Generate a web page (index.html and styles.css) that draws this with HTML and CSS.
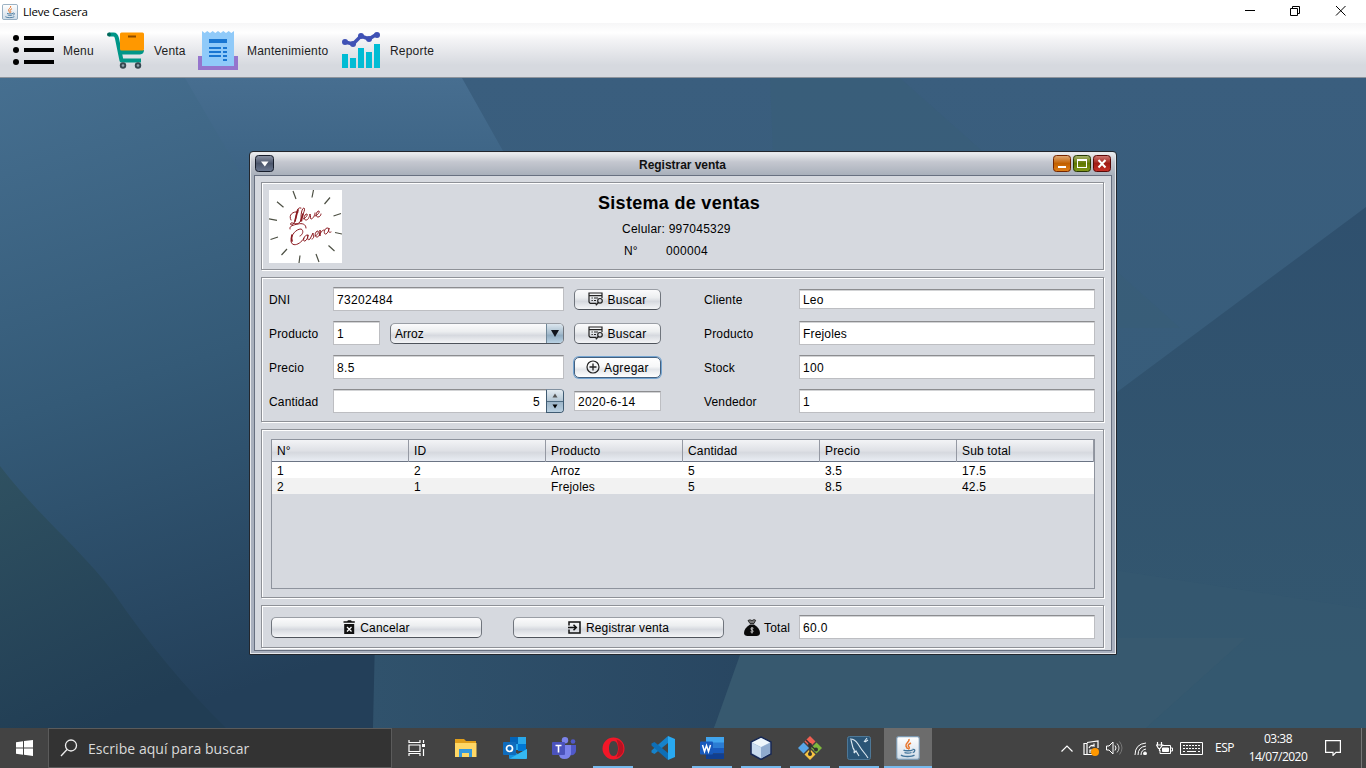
FILE: index.html
```html
<!DOCTYPE html>
<html lang="es">
<head>
<meta charset="utf-8">
<title>Lleve Casera</title>
<link rel="stylesheet" href="styles.css">
</head>
<body>
<svg class="defs" width="0" height="0">
  <defs>
    <linearGradient id="cup" x2="0" y2="1"><stop offset="0" stop-color="#fff"/><stop offset="1" stop-color="#cfdce8"/></linearGradient>
    <symbol id="java" viewBox="0 0 24 24">
      <rect x=".7" y=".7" width="22.6" height="22.6" rx="2" fill="url(#cup)" stroke="#7d9ab2" stroke-width="1.2"/>
      <path d="M13 3c1 3-4 4-3 7 .3 1.2 1.4 1.8 1.4 3M15 7c-3 1.500-3.500 2.500-2 4 .6 1 0 2-.8 2.300" fill="none" stroke="#e8762c" stroke-width="1.5"/>
      <path d="M7.500 14c1 1 7.500 1 9 0M8.500 16.500c1 .8 5.500.8 7 0M5 19c2 2 11 2 13.500 0M16.500 13.500c3-.5 3 2.500.2 3" fill="none" stroke="#41749a" stroke-width="1.3"/>
    </symbol>
    <symbol id="find" viewBox="0 0 16 14">
      <path d="M8.500 11.300H2.200L1 10V1h13v5M1 3.700h13" fill="none" stroke="#222" stroke-width="1.200"/>
      <path d="M3.500 6h1.300M6 6h4M3.500 8.500h1.300M6 8.500h2" stroke="#222"/>
      <circle cx="12" cy="8.800" r="2.300" fill="none" stroke="#222" stroke-width="1.200"/>
      <path d="M10.400 10.500 7.800 13.300" stroke="#222" stroke-width="1.400"/>
    </symbol>
  </defs>
</svg>
<div class="screen">
  <header class="titlebar">
    <svg class="app-icon" width="16" height="16"><use href="#java"/></svg>
    <span class="app-name">Lleve Casera</span>
    <svg class="winctl" width="104" height="16" viewBox="0 0 104 16" fill="none" stroke="#000">
      <path d="M0 6.500h10M45.500 4.500h7v7h-7zM47.500 4.500v-2h7v7h-2M91 2l9.500 9.500M100.500 2 91 11.500"/>
    </svg>
  </header>
  <nav class="toolbar">
    <a class="tool menu">
      <svg width="42" height="30" viewBox="0 0 42 30"><g><circle cx="3" cy="3" r="3"/><circle cx="3" cy="15" r="3"/><circle cx="3" cy="27" r="3"/><path d="M11 1h30v4H11zM11 13h30v4H11zM11 25h30v4H11z"/></g></svg>
      <span>Menu</span>
    </a>
    <a class="tool sale">
      <svg width="38" height="38" viewBox="0 0 38 38">
        <path d="M2 3.500h4.500c2 0 3 1.500 3.500 4L14.500 29.500h19.500" fill="none" stroke="#009688" stroke-width="4" stroke-linejoin="round"/>
        <circle cx="2" cy="3.500" r="2" fill="#00695c"/>
        <path d="M11 19h26q0 4-4 4.500H12z" fill="#009688"/>
        <rect x="13" y="1.500" width="24" height="18" rx="1.500" fill="#ff9800"/><path d="M21 4.500h8v2h-8z" fill="#8a4b00"/>
        <circle cx="16" cy="34.500" r="3.200" fill="#37474f"/><circle cx="31" cy="34.500" r="3.200" fill="#37474f"/><circle cx="16" cy="34.500" r="1.300" fill="#90a4ae"/><circle cx="31" cy="34.500" r="1.300" fill="#90a4ae"/>
      </svg>
      <span>Venta</span>
    </a>
    <a class="tool maint">
      <svg width="40" height="40" viewBox="0 0 40 40">
        <path d="M0 26h40v14H0z" fill="#9575cd"/>
        <path d="M4 1l2.700 2L9.300 1 12 3l2.700-2 2.600 2L20 1l2.700 2 2.600-2L28 3l2.700-2 2.600 2L36 1v35H4z" fill="#90caf9"/>
        <path d="M11 9h18v4H11zM11 17h12v2H11zM11 21h12v2H11zM11 25h12v2H11zM25 17h4v2h-4zM25 21h4v2h-4zM25 25h4v2h-4zM25 29h4v2h-4z" fill="#1976d2"/>
      </svg>
      <span>Mantenimiento</span>
    </a>
    <a class="tool report">
      <svg width="39" height="38" viewBox="0 0 39 38">
        <path d="M0 23h6v14H0zM8 27h6v10H8zM16 17h6v20h-6zM24 21h6v16h-6zM32 13h6v24h-6z" fill="#00bcd4"/>
        <path d="M3 11l8 2 8-8 8 3 8-5" stroke="#3f51b5" stroke-width="3.500" fill="none"/>
        <g fill="#3f51b5"><circle cx="3" cy="11" r="3"/><circle cx="11" cy="13" r="3"/><circle cx="19" cy="5" r="3"/><circle cx="27" cy="8" r="3"/><circle cx="35" cy="4" r="3"/></g>
      </svg>
      <span>Reporte</span>
    </a>
  </nav>
  <main class="desktop">
    <svg class="wallpaper" width="1366" height="650" viewBox="0 0 1366 650">
      <defs>
        <linearGradient id="w1" x1="0" y1="0" x2=".25" y2="1"><stop offset="0" stop-color="#466f90"/><stop offset=".5" stop-color="#345a77"/><stop offset="1" stop-color="#233f59"/></linearGradient>
        <linearGradient id="w2" x1="0" y1="0" x2="0" y2="1"><stop offset="0" stop-color="#476e90"/><stop offset=".3" stop-color="#3d6485"/><stop offset="1" stop-color="#304f6d"/></linearGradient>
        <linearGradient id="w3" x1="0" y1="0" x2="0" y2="1"><stop offset="0" stop-color="#3a5e7e"/><stop offset="1" stop-color="#355b76"/></linearGradient>
        <linearGradient id="w4" x1="0" y1="0" x2=".4" y2="1"><stop offset="0" stop-color="#2f5161"/><stop offset="1" stop-color="#213d54"/></linearGradient>
        <linearGradient id="w5" x1="0" y1="0" x2="0" y2="1"><stop offset="0" stop-color="#2f506e"/><stop offset="1" stop-color="#34586f"/></linearGradient>
        <linearGradient id="w6" x1="0" y1="0" x2="1" y2="0"><stop offset="0" stop-color="#30526c"/><stop offset="1" stop-color="#284661"/></linearGradient>
      </defs>
      <path d="M0 0h500v650H0z" fill="url(#w1)"/>
      <path d="M185 0h290l125 300H340L248 108z" fill="url(#w2)"/>
      <path d="M462 0h904v650H600V246L503 73z" fill="url(#w3)"/>
      <path d="M770 0h130l280 250H780z" fill="#3a5f75" opacity=".4"/>
      <path d="M1366 129 1117 314 1000 420v230h366z" fill="url(#w5)"/>
      <path d="M1100 490l266 41v119h-266z" fill="#355970" opacity=".6"/>
      <path d="M0 388Q60 540 113 514L226 650H0z" fill="none"/>
      <path d="M0 388C40 440 80 470 113 514Q165 590 226 650H0z" fill="url(#w4)"/>
      <path d="M375 560h380l-41 90H373z" fill="url(#w6)"/>
      <path d="M746 560h500l-100 90H714z" fill="#37596f"/>
    </svg>
    <section class="frame">
      <div class="frame-title">
        <svg width="20" height="19" viewBox="0 0 20 19"><defs><linearGradient id="fm" x2="0" y2="1"><stop offset="0" stop-color="#8c93a5"/><stop offset=".5" stop-color="#4c566c"/><stop offset="1" stop-color="#6c7991"/></linearGradient></defs><rect x=".5" y=".5" width="18" height="16" rx="3" fill="url(#fm)" stroke="#171d2b"/><path d="M6 6.500h7.500l-3.700 5z" fill="#fff"/></svg>
        <b class="t-frame">Registrar venta</b>
        <svg class="frame-btns" width="58" height="19" viewBox="0 0 58 19">
          <defs>
            <linearGradient id="fo" x2="0" y2="1"><stop offset="0" stop-color="#e1ab79"/><stop offset=".5" stop-color="#c26000"/><stop offset="1" stop-color="#df7f19"/></linearGradient>
            <linearGradient id="fg" x2="0" y2="1"><stop offset="0" stop-color="#a9b573"/><stop offset=".5" stop-color="#5f7700"/><stop offset="1" stop-color="#82991b"/></linearGradient>
            <linearGradient id="fr" x2="0" y2="1"><stop offset="0" stop-color="#d07b77"/><stop offset=".5" stop-color="#a01c15"/><stop offset="1" stop-color="#c93028"/></linearGradient>
          </defs>
          <rect x=".5" y=".5" width="17" height="16" rx="3" fill="url(#fo)" stroke="#742600"/><path d="M5 11h8v2H5z" fill="#fff"/>
          <rect x="20.500" y=".5" width="17" height="16" rx="3" fill="url(#fg)" stroke="#283907"/><path d="M24 4h10v9H24zm1 2v6h8V6z" fill="#fff" fill-rule="evenodd"/>
          <rect x="40.500" y=".5" width="17" height="16" rx="3" fill="url(#fr)" stroke="#590908"/><path d="M45.500 5l7 7.500M52.500 5l-7 7.500" stroke="#fff" stroke-width="2"/>
        </svg>
      </div>
      <div class="frame-body">
        <div class="panel head">
          <svg class="logo" width="73" height="73" viewBox="0 0 73 73">
            <path d="M0 0h73v73H0z" fill="#fff"/>
            <path d="M24 1l3 8M44.500 0 43 7.500M61 7.500 55.500 14M72 23.500 64.500 26M66 42.500l7 1.500M59.500 55.500 65.500 61M47 64l3 8M31 65.500 30 73M18 59l-5.500 6M9 47l-7.500 2.500M0 28.800l8 1.500M8 11.800l6.500 5.500" stroke="#4d5044" stroke-width="1.200" fill="none"/>
            <g fill="none" stroke="#8b1a20" stroke-linecap="round">
              <path d="M22 30C19 25 24 21 29 22M32 18C27 16 28 26 26 31C25 35 20 36 22 33C24 32 27 36 31 32C33 26 37 19 35 18C32 18 31 31 33 31"/>
              <path d="M34 29c3-1 5-4 4-5c-3 0-4 6-1 6c2 0 3-2 4-6c1 2 0 5 1 5c2 0 4-4 4-6M46 26c3-1 5-4 4-5c-3 0-4 6-1 6c2 0 3-2 3-3"/>
              <path d="M37 38c0-4-4-5-8-4c-5 1-9 2-8 5M31 46c3-1 4-6 1-7c-5 0-10 6-10 12c1 7 10 3 13-3"/>
              <path d="M39 45c-4-1-6 7-3 6c2-1 3-4 3-6c-1 4 0 6 2 4l3-6c0 3 2 5-1 6M46 46c3-1 4-4 3-5c-3 0-4 6-1 6c2 0 3-3 3-7c1 2-1 5 0 6c0-3 2-6 4-6M59 38c-4-1-5 7-2 6c2-1 3-4 3-6c-1 4 0 5 2 4"/>
              <path d="M26 31c1-4 2-9 3-11M32 31l2-7M23 45q-1 3 0 6" stroke-width="1.700"/>
            </g>
          </svg>
          <div class="company">
            <h1 class="t-h1">Sistema de ventas</h1>
            <p class="phone">Celular: 997045329</p>
            <p class="serial"><span>N°</span><span class="num">000004</span></p>
          </div>
        </div>
        <div class="panel form">
          <div class="row">
            <label>DNI</label><div class="input wide num">73202484</div>
            <button class="btn"><svg width="16" height="14"><use href="#find"/></svg><span>Buscar</span></button>
            <label class="right">Cliente</label><div class="input long short">Leo</div>
          </div>
          <div class="row">
            <label>Producto</label><div class="input code num">1</div>
            <div class="combo"><span>Arroz</span><i><svg width="9" height="8"><path d="M0 1h8L4 8z" fill="#10141c"/></svg></i></div>
            <button class="btn"><svg width="16" height="14"><use href="#find"/></svg><span>Buscar</span></button>
            <label class="right">Producto</label><div class="input long">Frejoles</div>
          </div>
          <div class="row">
            <label>Precio</label><div class="input wide num">8.5</div>
            <button class="btn focus"><svg width="14" height="14" viewBox="0 0 14 14"><circle cx="7" cy="7" r="6" fill="none" stroke="#222" stroke-width="1.200"/><path d="M7 3.500v7M3.500 7h7" stroke="#222" stroke-width="1.300"/></svg><span>Agregar</span></button>
            <label class="right">Stock</label><div class="input long num">100</div>
          </div>
          <div class="row">
            <label>Cantidad</label><div class="spinner"><div class="input num">5</div><div class="steps"><i><svg width="7" height="5"><path d="M.5 4.500h5L3 .5z" fill="#555"/></svg></i><i><svg width="7" height="5"><path d="M.5.500h5L3 4.500z" fill="#000"/></svg></i></div></div>
            <div class="input date">2020-6-14</div>
            <label class="right">Vendedor</label><div class="input long num">1</div>
          </div>
        </div>
        <div class="panel list">
          <div class="table">
            <div class="tr th"><span>N°</span><span>ID</span><span>Producto</span><span>Cantidad</span><span>Precio</span><span>Sub total</span></div>
            <div class="tr"><span>1</span><span>2</span><span>Arroz</span><span>5</span><span>3.5</span><span>17.5</span></div>
            <div class="tr alt"><span>2</span><span>1</span><span>Frejoles</span><span>5</span><span>8.5</span><span>42.5</span></div>
          </div>
        </div>
        <div class="panel foot">
          <button class="btn big"><svg width="12" height="14" viewBox="0 0 12 14"><path d="M.5 1.300h3.700L5 .3h3l.8 1h3v1.500H.5zM1.200 4h10v10h-10z" fill="#111"/><path d="M4 7l4.500 4.500M8.500 7 4 11.500" stroke="#fff" stroke-width="1.300"/></svg><span>Cancelar</span></button>
          <button class="btn big second"><svg width="13" height="13" viewBox="0 0 13 13"><path d="M1 4.500V1h11v11H1V8.500" fill="none" stroke="#111" stroke-width="1.500"/><path d="M0 6.500h8M5.500 3.700l2.800 2.800-2.800 2.800" fill="none" stroke="#111" stroke-width="1.500"/></svg><span>Registrar venta</span></button>
          <label class="total"><svg width="17" height="17" viewBox="0 0 17 17"><path d="M6 5.500C2 8 0 11 0 14c0 2 1.500 3 3.500 3h9c2 0 3.500-1 3.500-3 0-3-2-6-6-8.500z" fill="#0a0a0a"/><path d="M4 1.500 6 .8l2 .8 2-1 1.700.7L10 4.500H6z" fill="#777" stroke="#111" stroke-width=".8"/><path d="M9.500 9.300c-3-1-3.500 1.200-1.500 1.700s1.500 3-1.500 1.800M8 8v6.500" stroke="#ddd" stroke-width=".9" fill="none"/></svg><span>Total</span></label>
          <div class="input long num">60.0</div>
        </div>
      </div>
    </section>
  </main>
  <footer class="taskbar">
    <div class="start"><svg width="17" height="16" viewBox="0 0 17 16"><path d="M0 2.200 7 1.200v6.300H0zM8 1l9-1v7.500H8zM0 8.500h7v6.300l-7-1zM8 8.500h9V16l-9-1.200z" fill="#fff"/></svg></div>
    <div class="search"><svg width="18" height="18" viewBox="0 0 18 18" fill="none" stroke="#eee" stroke-width="1.300"><circle cx="11" cy="6.500" r="5.500"/><path d="M7 10.500 1 17"/></svg><span>Escribe aquí para buscar</span></div>
    <div class="apps">
      <span><svg width="18" height="16" viewBox="0 0 18 16" fill="none" stroke="#fff" stroke-width="1.200"><path d="M1 0v2.500h11V0M1 5h11v6.500H1zM1 16v-2.500h11V16M15.500 0v3M15.500 9v7"/><path d="M14 4h3v3h-3z" fill="#fff" stroke="none"/></svg></span>
      <span><svg width="22" height="20" viewBox="0 0 22 20"><path d="M0 1h9l2 2h10v6H0z" fill="#e09e1a"/><path d="M0 5h21.500v14H0z" fill="#ffd765"/><path d="M4 19v-8h13v8h-3v-4H7v4z" fill="#3598db"/></svg></span>
      <span><svg width="24" height="22" viewBox="0 0 24 22"><path d="M7 0h16v13H7z" fill="#28a8ea"/><path d="M7 0h8v7H7z" fill="#0364b8"/><path d="M15 7h8v7h-8z" fill="#0078d4"/><path d="M6 12l9 5 9-5v8.500c0 1-.5 1.500-1.500 1.500h-15C6.500 22 6 21.500 6 20.500z" fill="#1490df"/><path d="M7 21.500 24 12v8.500q0 1.500-1.500 1.500z" fill="#35b8f1"/><rect y="5" width="13" height="13" rx="1" fill="#0f6cbd"/><circle cx="6.500" cy="11.500" r="3" fill="none" stroke="#fff" stroke-width="1.700"/></svg></span>
      <span><svg width="24" height="22" viewBox="0 0 24 22"><circle cx="13" cy="3.200" r="3.200" fill="#7b83eb"/><circle cx="21" cy="4.500" r="2.300" fill="#5059c9"/><path d="M16 8h8v6q-1 5-6 4z" fill="#5059c9"/><path d="M7 8h12v9q-1 5-6.500 5T7 17z" fill="#7b83eb"/><rect y="5" width="13" height="13" rx="1" fill="#4b53bc"/><path d="M3.500 8.500h6M6.500 8.500v7" stroke="#fff" stroke-width="1.600"/></svg></span>
      <span class="run"><svg width="23" height="23" viewBox="0 0 23 23"><path d="M11.500.5a11 11 0 1 0 0 22 11 11 0 0 0 0-22zm0 3.500c3 0 4.500 3.500 4.500 7.500s-1.500 7.500-4.500 7.500S7 15.500 7 11.500 8.500 4 11.500 4z" fill="#f21728" fill-rule="evenodd"/><path d="M14.500 2.500q7 2 7 9t-7 9q4-9 0-18z" fill="#b81222"/></svg></span>
      <span><svg width="24" height="24" viewBox="0 0 24 24"><path d="M17 0 24 3v18l-7 3z" fill="#29a9f1"/><path d="M17 0v7L3.500 18 .5 16.500v-2z" fill="#1683cc"/><path d="M17 24v-7L3.500 6 .5 7.500v2z" fill="#0e6fb7"/></svg></span>
      <span class="run"><svg width="24" height="22" viewBox="0 0 24 22"><path d="M6 0h18v6H6z" fill="#41a5ee"/><path d="M6 5.500h18V11H6z" fill="#2b7cd3"/><path d="M6 11h18v5.500H6z" fill="#185abd"/><path d="M6 16.500h18V22H6z" fill="#103f91"/><rect y="4.500" width="13" height="13" rx="1" fill="#185abd"/><path d="M2.500 8l2 6.500 2-6 2 6 2-6.500" stroke="#fff" stroke-width="1.500" fill="none"/></svg></span>
      <span class="run"><svg width="22" height="24" viewBox="0 0 22 24"><path d="M11 1 21 6v12l-10 5.500L1 18V6z" fill="#a5bfdd" stroke="#182955" stroke-width="1.500"/><path d="M11 2l9 4.500-9 4.500-9-4.500z" fill="#eef6fb"/><path d="M2 7l9 4.500V22l-9-5z" fill="#c9dcf0"/><path d="M20 7l-9 4.500V22l9-5z" fill="#8fabce"/></svg></span>
      <span class="run"><svg width="24" height="24" viewBox="0 0 24 24"><path d="M12 0l5.500 5.500L12 11 6.500 5.500z" fill="#f05f52"/><path d="M5.500 6.500 11 12l-5.500 5.500L0 12z" fill="#58a6e8"/><path d="M18.500 6.500 24 12l-5.500 5.500L13 12z" fill="#7fb83d"/><path d="M12 13l5.500 5.500L12 24l-5.500-5.500z" fill="#f7c342"/><path d="M8 4l4 4v11M12 9l6 5" stroke="#313131" stroke-width="1.500" fill="none"/><circle cx="12" cy="9" r="2" fill="#313131"/><circle cx="18" cy="13.500" r="2" fill="#313131"/><circle cx="12" cy="18" r="2" fill="#313131"/></svg></span>
      <span class="run"><svg width="24" height="24" viewBox="0 0 24 24"><rect x=".5" y=".5" width="23" height="23" rx="2" fill="#2b5576" stroke="#4e7897"/><path d="M3 3q5 0 8 5t8 11l2 3M4 4l2 8q2 2 1 5l2-2 3 5M17 6l3-4M18 6l3-2" stroke="#dde9f1" stroke-width="1.100" fill="none"/></svg></span>
      <span class="run active"><svg width="24" height="24"><use href="#java"/></svg></span>
    </div>
    <div class="tray">
      <svg width="12" height="7" viewBox="0 0 12 7" fill="none" stroke="#fff" stroke-width="1.200"><path d="M.5 6.500 6 1l5.500 5.500"/></svg>
      <svg class="sync" width="17" height="17" viewBox="0 0 17 17" fill="none" stroke="#fff" stroke-width="1.200"><path d="M4 2.500 15 1v7M1 3.500h3v11H1zM4 14.500h6"/><path d="M6 8q2-4 5-2V3.500M11 6H8.500M7 13V10h2.500"/><circle cx="12" cy="12" r="4" fill="#ff9800" stroke="none"/></svg>
      <svg class="vol" width="18" height="14" viewBox="0 0 18 14" fill="none" stroke="#fff"><path d="M.5 5h2.500l4-4v12l-4-4H.500zM9 4.500q2 2.500 0 5"/><path d="M11 2.500q4 4.500 0 9" stroke="#ccc"/><path d="M13.500.5q5 6.500 0 13" stroke="#777"/></svg>
      <svg class="wifi" width="13" height="13" viewBox="0 0 13 13" fill="none" stroke="#fff"><path d="M1 13Q1 2 12 1M4 13q0-8 8-9M7 13q0-5 5-6"/><circle cx="11" cy="11.500" r="1.500" fill="#fff"/></svg>
      <svg class="bat" width="17" height="13" viewBox="0 0 17 13" fill="none" stroke="#fff"><path d="M6 3.500h8.500v8H4V8M15 6h1.500v3H15"/><path d="M6.500 6h6v3.500h-6z" fill="#fff"/><path d="M1.500 0v3h4V0M.5 3h6L4 6.500H2.500zM3.500 6v3" stroke-width="1.200"/></svg>
      <svg class="kbd" width="23" height="13" viewBox="0 0 23 13" fill="none" stroke="#fff"><path d="M.5.5h22v12H.5z"/><path d="M3 3.500h17M3 6.500h17" stroke-dasharray="2 1"/><path d="M3 9.500h2M7 9.500h9M18 9.500h2"/></svg>
      <span class="lang">ESP</span>
      <div class="clock"><span>03:38</span><span>14/07/2020</span></div>
      <svg class="note" width="16" height="16" viewBox="0 0 16 16" fill="none" stroke="#fff" stroke-width="1.200"><path d="M.6.6h14.800v11.800H11l-3 3v-3H.6z"/></svg>
    </div>
    <i class="peek"></i>
  </footer>
</div>
</body>
</html>
```
FILE: styles.css
```css
* { box-sizing: border-box; }
body { margin: 0; font: 12px/16px "Liberation Sans", Arial, sans-serif; color: #000; letter-spacing: .16px; }
svg { display: block; flex: none; }
.defs { position: absolute; }
.screen { display: flex; flex-direction: column; width: 1366px; height: 768px; overflow: hidden; }

.titlebar { display: flex; align-items: center; height: 23px; padding: 0 17px 0 2px; background: #fff; }
.app-name { margin-left: 5px; font: 11.5px/16px "Open Sans", "Noto Sans", sans-serif; letter-spacing: -.2px; }
.winctl { margin-left: auto; }

.toolbar { display: flex; height: 55px; background: linear-gradient(#f6f6f7, #fff 18%, #f4f4f6 30%, #d6d9df 78%, #d6d9df); border-bottom: 1px solid #8e949c; color: #1d1d1d; letter-spacing: .2px; }
.tool { display: flex; align-items: center; }
.tool span { padding-top: 2px; }
.menu { width: 80px; margin-left: 13px; gap: 8px; }
.sale { width: 79px; margin-left: 14px; gap: 9px; }
.maint { width: 130px; margin-left: 12px; gap: 9px; }
.report { margin-left: 14px; gap: 9px; }

.desktop { position: relative; height: 650px; background: #365a75; }
.frame { position: absolute; left: 249px; top: 73px; width: 868px; height: 504px; border: 1px solid #22262d; border-radius: 4px 4px 1px 1px; padding: 0 4px 4px; background: linear-gradient(#f0f1f3, #c4c7cf 10px, #a9b0bb 23px, #a9b0be); box-shadow: inset 1px 1px #e6e8eb, inset -1px -1px #e6e8eb; }
.frame-title { display: flex; align-items: flex-start; height: 23px; padding: 3px 1px 0 1px; }
.t-frame { margin-left: 364px; padding-top: 1px; line-height: 19px; color: #111; letter-spacing: -.03px; }
.frame-btns { margin-left: auto; }
.frame-body { display: flex; flex-direction: column; gap: 6px; height: 476px; padding: 6px 6px 0; border: 1px solid #687080; background: #d6d9df; }

.panel { flex: none; width: 843px; margin-bottom: 1px; border: 1px solid #8e9197; box-shadow: inset 1px 1px #fff, 1px 1px #fff; }
.head { display: flex; height: 88px; padding: 7px; }
.company { margin-left: 256px; }
.t-h1 { margin: 2px 0 0 0; font-size: 18px; line-height: 22px; letter-spacing: .3px; white-space: nowrap; }
.company p { margin: 0; line-height: 22px; }
.company .phone { margin: 4px 0 0 24px; letter-spacing: .22px; }
.serial { display: flex; }
.serial span:first-child { width: 42px; margin-left: 26px; }
.num { letter-spacing: .33px; }

.form { display: flex; flex-direction: column; gap: 10px; height: 145px; padding: 9px 7px; }
.row { display: flex; align-items: center; height: 24px; }
label { width: 64px; padding-top: 2px; }
label.right { width: 95px; margin-left: 43px; }
.input { height: 24px; padding: 4px 3px 0; border: 1px solid #bdbec2; border-top-color: #8c8d90; background: #fff; box-shadow: inset 0 1px #d2d3d5; }
.wide { width: 231px; margin-right: 10px; }
.code { width: 47px; margin-right: 10px; }
.long { width: 296px; }
.short, .date { height: 20px; padding-top: 2px; }
.date { width: 87px; letter-spacing: .3px; }
.btn { display: flex; align-items: center; justify-content: center; gap: 3px; width: 87px; height: 21px; padding: 0; border: 1px solid #70757d; border-top-color: #9a9ea5; border-bottom-color: #4e535b; border-radius: 5px; background: linear-gradient(#fbfbfc, #eceef0 40%, #d6d9df 60%, #f4f5f7); font: inherit; letter-spacing: .3px; color: #000; }
.btn span { padding-top: 1px; }
.btn.focus { gap: 4px; border-color: #43607f; background: linear-gradient(#fff, #f6f7f8 45%, #e3e6ea 60%, #fff); box-shadow: 0 0 0 1px #73a4d1; }
.combo { display: flex; justify-content: space-between; align-items: center; width: 174px; height: 21px; margin-right: 10px; padding-left: 4px; border: 1px solid #70757d; border-top-color: #9a9ea5; border-bottom-color: #4e535b; border-radius: 5px; background: linear-gradient(#fbfbfc, #eceef0 40%, #d6d9df 60%, #f4f5f7); overflow: hidden; letter-spacing: 0; }
.combo span { padding-top: 1px; }
.combo i { display: flex; align-items: center; justify-content: center; width: 17px; height: 19px; border-left: 1px solid #6f8798; background: linear-gradient(#dbe6ee, #a6bccd 50%, #91acc1 60%, #b9d2e4); }
.spinner { display: flex; width: 231px; margin-right: 10px; }
.spinner .input { width: 213px; padding-right: 6px; text-align: right; border-right: 0; }
.steps { display: flex; flex-direction: column; width: 18px; height: 24px; border: 1px solid #3f5b72; border-top-color: #8090a0; border-radius: 0 4px 4px 0; overflow: hidden; }
.steps i { display: flex; flex: 1; align-items: center; justify-content: center; background: linear-gradient(#e3ebf1, #b3c6d4); }
.steps i + i { border-top: 1px solid #4f6c82; background: linear-gradient(#9db5c8, #b8cfe0); }

.list { height: 169px; padding: 9px; }
.table { width: 824px; height: 150px; border: 1px solid #8e939d; }
.tr { display: grid; grid-template-columns: repeat(6, 137px); height: 16px; background: #fff; line-height: 18px; }
.tr.alt { background: #f2f2f2; }
.tr span { padding-left: 5px; }
.th { height: 22px; line-height: 22px; border-bottom: 1px solid #6b7484; background: linear-gradient(#f3f4f6, #dfe1e6 50%, #d6d9df 60%, #e9edf4); }
.th span { padding-top: 1px; line-height: 21px; border-right: 1px solid #9599a3; }

.foot { display: flex; align-items: center; height: 43px; padding: 1px 7px 0 9px; }
.big { width: 211px; gap: 5px; letter-spacing: .2px; }
.second { margin-left: 31px; letter-spacing: .1px; }
.total { display: flex; align-items: center; gap: 3px; width: 55px; margin-left: 20px; padding: 0; }
.total span { padding-top: 2px; }

.taskbar { display: flex; height: 40px; background: #434343; color: #fff; font-family: "Open Sans", "Noto Sans", sans-serif; }
.start { display: flex; align-items: center; justify-content: center; width: 48px; }
.search { display: flex; align-items: center; gap: 10px; width: 344px; padding-left: 11px; background: #333; border: 1px solid #5b5b5b; font-size: 14px; color: #dadada; }
.search span { padding-top: 1px; letter-spacing: .05px; }
.apps { display: flex; width: 541px; margin-right: -1px; }
.apps span { display: flex; align-items: center; justify-content: center; flex: none; width: 49.2px; padding: 0 4px; }
.apps .run { background: linear-gradient(#76b9ed, #76b9ed) bottom / 40px 2px no-repeat; }
.apps .active { width: 48px; background: linear-gradient(#76b9ed, #76b9ed) bottom / 100% 2px no-repeat, #6c6c6c; }
.tray { display: flex; align-items: center; margin-left: 129px; font-size: 12px; }
.sync { margin-left: 10px; }
.vol { margin-left: 6px; }
.wifi { margin-left: 10px; }
.bat { margin-left: 9px; }
.kbd { margin-left: 7px; }
.lang { width: 20px; margin-left: 12px; font-size: 12px; letter-spacing: -.5px; }
.clock { display: flex; flex-direction: column; align-items: center; width: 62px; margin-left: 12px; line-height: 18px; letter-spacing: -.5px; }
.note { margin-left: 16px; }
.peek { width: 1px; margin-left: auto; margin-right: 4px; background: #777; }
```
